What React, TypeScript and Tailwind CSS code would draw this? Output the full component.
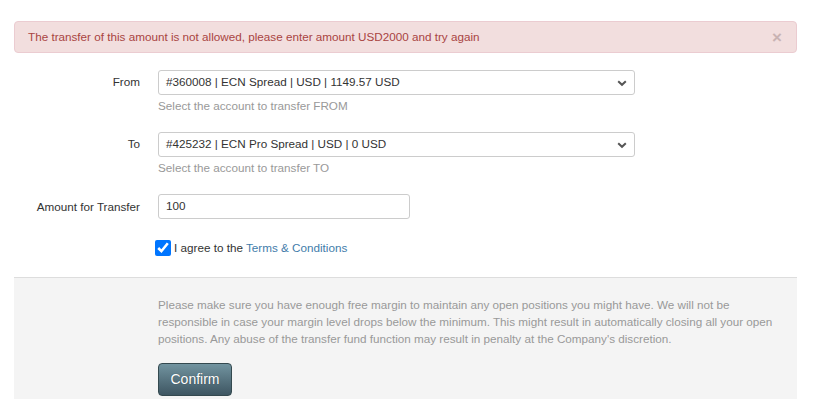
import React from 'react';

function Chevron() {
    return (
        <svg width="10" height="7" viewBox="0 0 10 7" className="absolute right-[7px] top-[9px] pointer-events-none">
            <path d="M1.2 1.2 L5 4.8 L8.8 1.2" fill="none" stroke="#555" strokeWidth="2" />
        </svg>
    );
}

function SelectRow({ label, value, help }: { label: string; value: string; help: string }) {
    return (
        <div className="flex">
            <div className="w-[126px] text-right pt-[3px] text-[#333]">{label}</div>
            <div className="ml-[18px]">
                <div className="relative w-[477px] h-[25px] border border-[#ccc] rounded-[3px] bg-white">
                    <div className="pl-[7px] leading-[22px] text-[#333]">{value}</div>
                    <Chevron />
                </div>
                <div className="mt-[2px] leading-[17px] text-[#999]">{help}</div>
            </div>
        </div>
    );
}

export default function App() {
    return (
        <div className="bg-white w-[825px] h-[399px] overflow-hidden text-[11.7px] font-['Liberation_Sans',Arial,sans-serif]">
            <div className="pl-[14px] pr-[28px] pt-[21px]">
                {/* Alert */}
                <div className="flex items-center justify-between h-[32px] pl-[13px] pr-[14px] bg-[#f2dede] border border-[#ebccd1] rounded-[4px] text-[#a94442]">
                    <span>The transfer of this amount is not allowed, please enter amount USD2000 and try again</span>
                    <span className="text-[17px] font-bold leading-none text-[#c9b3b3]">×</span>
                </div>

                {/* Form */}
                <div className="mt-[17px]">
                    <SelectRow label="From" value="#360008 | ECN Spread | USD | 1149.57 USD" help="Select the account to transfer FROM" />
                    <div className="mt-[18px]">
                        <SelectRow label="To" value="#425232 | ECN Pro Spread | USD | 0 USD" help="Select the account to transfer TO" />
                    </div>
                    <div className="flex mt-[18px]">
                        <div className="w-[126px] text-right pt-[4px] text-[#333]">Amount for Transfer</div>
                        <div className="ml-[18px] w-[252px] h-[25px] border border-[#ccc] rounded-[3px] pl-[7px] leading-[22px] text-[#333]">100</div>
                    </div>
                    <div className="flex items-center mt-[21px] ml-[141px] h-[16px]">
                        <input type="checkbox" defaultChecked className="w-[16px] h-[16px] m-0 accent-[#0075ff]" />
                        <span className="ml-[3px] text-[#333]">
                            I agree to the <span className="text-[#3f7caa]">Terms &amp; Conditions</span>
                        </span>
                    </div>
                </div>

                {/* Footer panel */}
                <div className="mt-[21px] bg-[#f4f4f4] border-t border-[#ddd] h-[140px] pl-[144px] pt-[18px]">
                    <p className="w-[622px] leading-[17px] text-[#999]">
                        Please make sure you have enough free margin to maintain any open positions you might have. We will not be responsible in case your margin level drops below the minimum. This might result in automatically closing all your open positions. Any abuse of the transfer fund function may result in penalty at the Company's discretion.
                    </p>
                    <button className="mt-[16px] w-[74px] h-[33px] rounded-[4px] border border-[#34494f] bg-gradient-to-b from-[#7294a0] to-[#3e5662] text-white text-[14px] leading-none pb-[2px] [text-shadow:0_0_1px_rgba(0,0,0,0.4)]">
                        Confirm
                    </button>
                </div>
            </div>
        </div>
    );
}
